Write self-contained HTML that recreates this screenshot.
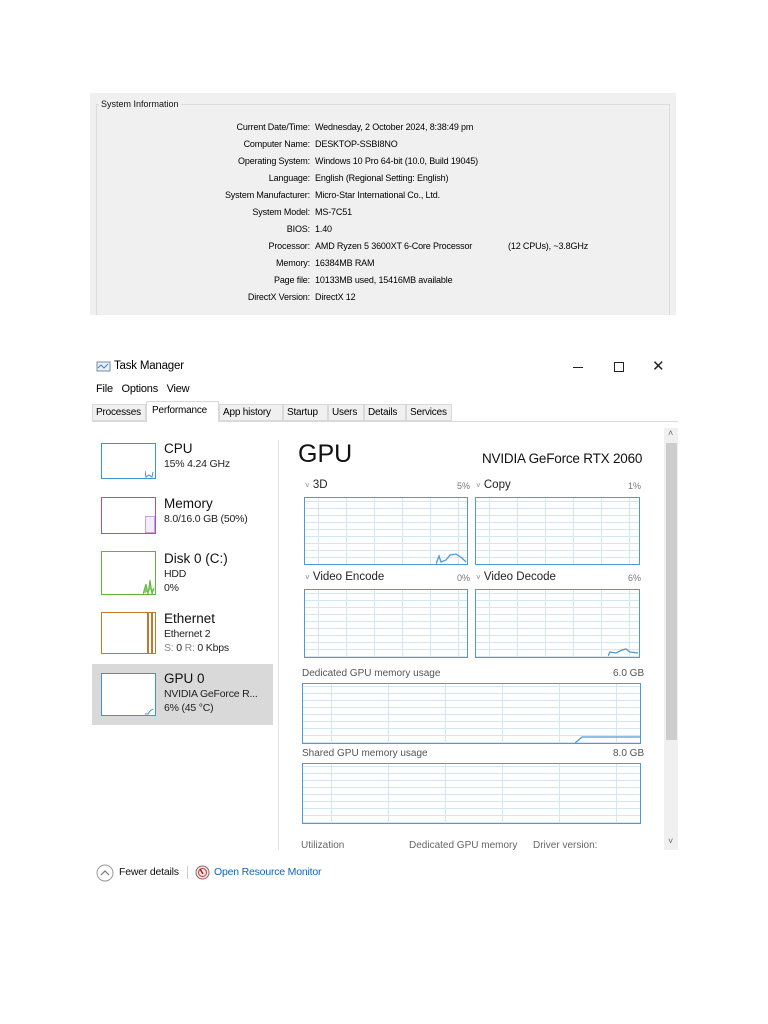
<!DOCTYPE html>
<html><head><meta charset="utf-8"><style>
*{margin:0;padding:0;box-sizing:border-box}
body{width:768px;height:1024px;background:#fff;font-family:"Liberation Sans",sans-serif;position:relative;overflow:hidden;color:#000}
.a{position:absolute;white-space:nowrap}
.si{font-size:9px;color:#111}
.lab{position:absolute;right:458px;text-align:right;font-size:9px;white-space:nowrap;letter-spacing:-0.15px}
.val{position:absolute;left:315px;font-size:9px;white-space:nowrap;letter-spacing:-0.15px}
.g{position:absolute;border:1.5px solid #4b9bd8;background-color:#fff;
background-image:linear-gradient(to right,#d4e6f5 1px,transparent 1px),linear-gradient(to bottom,#d4e6f5 1px,transparent 1px);
background-size:28px 100%,100% 7px;background-position:13px 0,0 3px}
.th{position:absolute;width:55px;background:#fff;border:1.5px solid}
.t1{font-size:13.5px;color:#111}
.t2{font-size:10.5px;color:#222;letter-spacing:-0.2px}
.gl{font-size:11.5px;color:#222}
.pc{font-size:9px;color:#777}
.ml{font-size:10px;color:#555}
.tab{position:absolute;top:404px;height:17px;background:#f0f0f0;border:1px solid #d9d9d9;font-size:10px;padding:2px 0 0 3px;letter-spacing:-0.2px;white-space:nowrap;overflow:hidden}
</style></head><body>
<div class="a" style="left:90px;top:93px;width:586px;height:222px;background:#f0f0f0"></div>
<div class="a" style="left:96px;top:104px;width:574px;height:211px;border:1px solid #dcdcdc;border-bottom:none"></div>
<div class="a si" style="left:99px;top:99px;background:#f0f0f0;padding:0 2px">System Information</div>
<div class="lab" style="top:122px">Current Date/Time:</div><div class="val" style="top:122px">Wednesday, 2 October 2024, 8:38:49 pm</div>
<div class="lab" style="top:139px">Computer Name:</div><div class="val" style="top:139px">DESKTOP-SSBI8NO</div>
<div class="lab" style="top:156px">Operating System:</div><div class="val" style="top:156px">Windows 10 Pro 64-bit (10.0, Build 19045)</div>
<div class="lab" style="top:173px">Language:</div><div class="val" style="top:173px">English (Regional Setting: English)</div>
<div class="lab" style="top:190px">System Manufacturer:</div><div class="val" style="top:190px">Micro-Star International Co., Ltd.</div>
<div class="lab" style="top:207px">System Model:</div><div class="val" style="top:207px">MS-7C51</div>
<div class="lab" style="top:224px">BIOS:</div><div class="val" style="top:224px">1.40</div>
<div class="lab" style="top:241px">Processor:</div><div class="val" style="top:241px">AMD Ryzen 5 3600XT 6-Core Processor</div><div class="val" style="top:241px;left:508px">(12 CPUs), ~3.8GHz</div>
<div class="lab" style="top:258px">Memory:</div><div class="val" style="top:258px">16384MB RAM</div>
<div class="lab" style="top:275px">Page file:</div><div class="val" style="top:275px">10133MB used, 15416MB available</div>
<div class="lab" style="top:292px">DirectX Version:</div><div class="val" style="top:292px">DirectX 12</div>

<svg class="a" style="left:96px;top:361px" width="15" height="12"><rect x="1" y="1" width="13" height="9" fill="#e8f1fa" stroke="#7a8a9a"/><polyline points="2,7 5,4 8,7 12,3" fill="none" stroke="#3a87c8"/></svg>
<div class="a" style="left:114px;top:360px;font-size:11.5px;letter-spacing:-0.2px">Task Manager</div>
<div class="a" style="left:573px;top:367px;width:10px;height:1px;background:#222"></div>
<div class="a" style="left:614px;top:362px;width:10px;height:10px;border:1px solid #222"></div>
<div class="a" style="left:652px;top:357px;font-size:15px;color:#222">✕</div>
<div class="a" style="left:96px;top:383px;font-size:11px;letter-spacing:-0.2px">File&nbsp;&nbsp; Options&nbsp;&nbsp; View</div>
<div class="a" style="left:92px;top:421px;width:586px;height:1px;background:#d9d9d9"></div>
<div class="tab" style="left:92px;width:54px">Processes</div>
<div class="a" style="left:146px;top:401px;width:73px;height:21px;background:#fff;border:1px solid #d9d9d9;border-bottom:none;font-size:10px;padding:3px 0 0 5px;letter-spacing:-0.2px">Performance</div>
<div class="tab" style="left:219px;width:64px">App history</div>
<div class="tab" style="left:283px;width:45px">Startup</div>
<div class="tab" style="left:328px;width:36px">Users</div>
<div class="tab" style="left:364px;width:42px">Details</div>
<div class="tab" style="left:406px;width:46px">Services</div>

<div class="a" style="left:664px;top:428px;width:14px;height:422px;background:#f0f0f0"></div>
<div class="a" style="left:666px;top:443px;width:11px;height:297px;background:#cdcdcd"></div>
<div class="a" style="left:668px;top:428px;font-size:9px;color:#666">˄</div>
<div class="a" style="left:668px;top:836px;font-size:9px;color:#666">˅</div>

<div class="a" style="left:278px;top:440px;width:1px;height:410px;background:#e3e3e3"></div>
<div class="a" style="left:92px;top:664px;width:181px;height:61px;background:#d9d9d9"></div>
<div class="th" style="left:101px;top:443px;height:36px;border-color:#3d94d1"></div>
<svg class="a" style="left:145px;top:470px" width="9" height="8"><polyline points="0,1 1,7 4,5 7,7 8,2" fill="none" stroke="#3d94d1"/></svg>
<div class="a t1" style="left:164px;top:441px">CPU</div><div class="a t2" style="left:164px;top:458px">15% 4.24 GHz</div>
<div class="th" style="left:101px;top:497px;height:37px;border-color:#a44fc8"></div>
<div class="a" style="left:145px;top:516px;width:10px;height:17px;background:#f1eef4;border:1px solid #c9a0da"></div>
<div class="a t1" style="left:164px;top:496px">Memory</div><div class="a t2" style="left:164px;top:513px">8.0/16.0 GB (50%)</div>
<div class="th" style="left:101px;top:551px;height:44px;border-color:#5db63a"></div>
<svg class="a" style="left:143px;top:578px" width="12" height="16"><polyline points="0,16 3,6 5,16 7,2 9,16 11,10" fill="#8cd06a" stroke="#5db63a"/></svg>
<div class="a t1" style="left:164px;top:551px">Disk 0 (C:)</div><div class="a t2" style="left:164px;top:568px">HDD</div><div class="a t2" style="left:164px;top:582px">0%</div>
<div class="th" style="left:101px;top:612px;height:42px;border-color:#c0792e"></div>
<div class="a" style="left:147px;top:613px;width:1.5px;height:40px;background:#c0792e"></div><div class="a" style="left:151px;top:613px;width:1.5px;height:40px;background:#c0792e"></div>
<div class="a t1" style="left:164px;top:611px">Ethernet</div><div class="a t2" style="left:164px;top:628px">Ethernet 2</div><div class="a t2" style="left:164px;top:642px"><span style="color:#888">S:</span> 0 <span style="color:#888">R:</span> 0 Kbps</div>
<div class="th" style="left:101px;top:673px;height:43px;border-color:#3d94d1"></div>
<svg class="a" style="left:145px;top:708px" width="9" height="7"><polyline points="0,6 3,6 5,3 8,1" fill="none" stroke="#3d94d1"/></svg>
<div class="a t1" style="left:164px;top:671px">GPU 0</div><div class="a t2" style="left:164px;top:688px">NVIDIA GeForce R...</div><div class="a t2" style="left:164px;top:702px">6% (45 °C)</div>

<div class="a" style="left:298px;top:440px;font-size:25px;color:#111">GPU</div>
<div class="a" style="left:482px;top:451px;font-size:13.5px;color:#111;letter-spacing:-0.2px">NVIDIA GeForce RTX 2060</div>
<div class="a gl" style="left:305px;top:479px"><span style="font-size:8px;color:#888">˅</span> 3D</div><div class="a pc" style="left:457px;top:481px">5%</div>
<div class="a gl" style="left:476px;top:479px"><span style="font-size:8px;color:#888">˅</span> Copy</div><div class="a pc" style="left:628px;top:481px">1%</div>
<div class="g" style="left:304px;top:497px;width:164px;height:68px"></div>
<svg class="a" style="left:436px;top:550px" width="32" height="15"><polyline points="0,14 3,6 5,12 10,10 14,5 20,4 26,8 30,12" fill="none" stroke="#4b9bd8" stroke-width="1.3"/></svg>
<div class="g" style="left:475px;top:497px;width:165px;height:68px"></div>
<div class="a gl" style="left:305px;top:571px"><span style="font-size:8px;color:#888">˅</span> Video Encode</div><div class="a pc" style="left:457px;top:573px">0%</div>
<div class="a gl" style="left:476px;top:571px"><span style="font-size:8px;color:#888">˅</span> Video Decode</div><div class="a pc" style="left:628px;top:573px">6%</div>
<div class="g" style="left:304px;top:589px;width:164px;height:69px"></div>
<div class="g" style="left:475px;top:589px;width:165px;height:69px"></div>
<svg class="a" style="left:608px;top:645px" width="32" height="12"><polyline points="0,11 2,7 8,8 14,5 18,4 22,7 30,8" fill="none" stroke="#4b9bd8" stroke-width="1.3"/></svg>
<div class="a ml" style="left:302px;top:668px">Dedicated GPU memory usage</div><div class="a ml" style="left:613px;top:668px">6.0 GB</div>
<div class="g" style="left:302px;top:683px;width:339px;height:61px;background-size:57px 100%,100% 7px;background-position:28px 0,0 2px"></div>
<svg class="a" style="left:575px;top:734px" width="66" height="10"><polyline points="0,9 7,3 66,3" fill="none" stroke="#4b9bd8" stroke-width="1.3"/></svg>
<div class="a ml" style="left:302px;top:748px">Shared GPU memory usage</div><div class="a ml" style="left:613px;top:748px">8.0 GB</div>
<div class="g" style="left:302px;top:763px;width:339px;height:61px;background-size:57px 100%,100% 7px;background-position:28px 0,0 2px"></div>
<div class="a" style="left:301px;top:840px;font-size:10px;color:#666">Utilization</div>
<div class="a" style="left:409px;top:840px;font-size:10px;color:#666">Dedicated GPU memory</div>
<div class="a" style="left:533px;top:840px;font-size:10px;color:#666">Driver version:</div>

<svg class="a" style="left:96px;top:864px" width="18" height="18"><circle cx="9" cy="9" r="8" fill="none" stroke="#999"/><polyline points="5,11 9,7 13,11" fill="none" stroke="#777" stroke-width="1.2"/></svg>
<div class="a" style="left:119px;top:866px;font-size:10.5px;color:#111;letter-spacing:-0.2px">Fewer details</div>
<div class="a" style="left:187px;top:866px;width:1px;height:13px;background:#ccc"></div>
<svg class="a" style="left:195px;top:865px" width="15" height="15"><circle cx="7.5" cy="7.5" r="6.5" fill="#f4eaea" stroke="#8a6a6a"/><circle cx="7.5" cy="7.5" r="4" fill="none" stroke="#c33"/><line x1="5" y1="4" x2="8" y2="9" stroke="#c00" stroke-width="1.3"/></svg>
<div class="a" style="left:214px;top:866px;font-size:10.5px;color:#0a66c2;letter-spacing:-0.2px">Open Resource Monitor</div>
</body></html>
